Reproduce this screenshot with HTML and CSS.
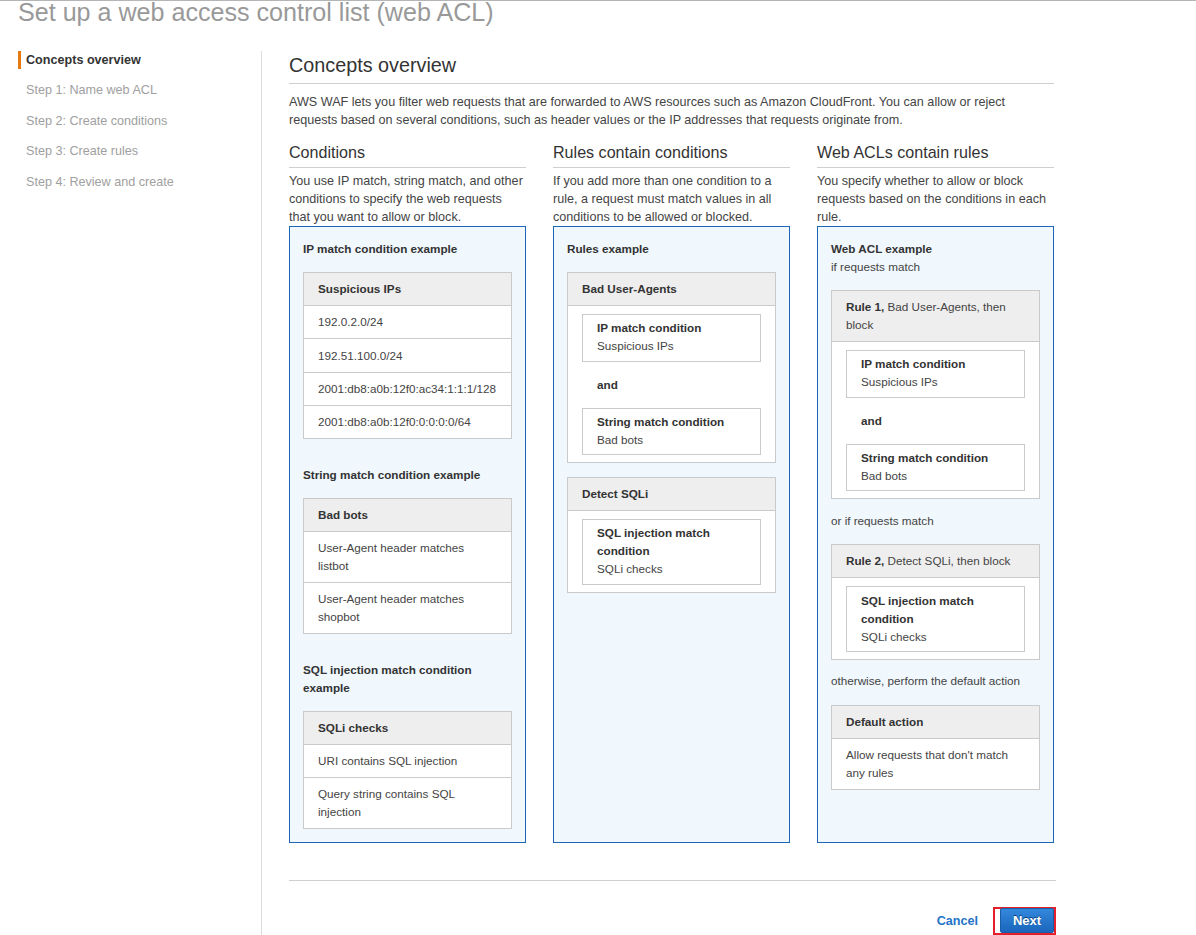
FILE: index.html
```html
<!DOCTYPE html>
<html lang="en">
<head>
<meta charset="utf-8">
<title>Set up a web access control list (web ACL)</title>
<link rel="stylesheet" href="styles.css">
</head>
<body>
<div class="page">
  <h1 class="page-title">Set up a web access control list (web ACL)</h1>
  <div class="wizard">
    <nav class="steps">
      <div class="step active">Concepts overview</div>
      <div class="step">Step 1: Name web ACL</div>
      <div class="step">Step 2: Create conditions</div>
      <div class="step">Step 3: Create rules</div>
      <div class="step">Step 4: Review and create</div>
    </nav>
    <main class="content">
      <h2 class="section-title">Concepts overview</h2>
      <p class="intro">AWS WAF lets you filter web requests that are forwarded to AWS resources such as Amazon CloudFront. You can allow or reject requests based on several conditions, such as header values or the IP addresses that requests originate from.</p>

      <div class="columns">
        <section class="col">
          <h3 class="col-title">Conditions</h3>
          <p class="col-desc">You use IP match, string match, and other conditions to specify the web requests that you want to allow or block.</p>
          <div class="example">
            <div class="group">
              <h4 class="ex-title">IP match condition example</h4>
              <div class="card">
                <div class="card-head"><b>Suspicious IPs</b></div>
                <div class="cell">192.0.2.0/24</div>
                <div class="cell">192.51.100.0/24</div>
                <div class="cell">2001:db8:a0b:12f0:ac34:1:1:1/128</div>
                <div class="cell">2001:db8:a0b:12f0:0:0:0:0/64</div>
              </div>
            </div>
            <div class="group">
              <h4 class="ex-title">String match condition example</h4>
              <div class="card">
                <div class="card-head"><b>Bad bots</b></div>
                <div class="cell">User-Agent header matches listbot</div>
                <div class="cell">User-Agent header matches shopbot</div>
              </div>
            </div>
            <div class="group">
              <h4 class="ex-title">SQL injection match condition example</h4>
              <div class="card">
                <div class="card-head"><b>SQLi checks</b></div>
                <div class="cell">URI contains SQL injection</div>
                <div class="cell">Query string contains SQL injection</div>
              </div>
            </div>
          </div>
        </section>

        <section class="col">
          <h3 class="col-title">Rules contain conditions</h3>
          <p class="col-desc">If you add more than one condition to a rule, a request must match values in all conditions to be allowed or blocked.</p>
          <div class="example">
            <h4 class="ex-title">Rules example</h4>
            <div class="card rule">
              <div class="card-head"><b>Bad User-Agents</b></div>
              <div class="card-body">
                <div class="cond"><b>IP match condition</b><span>Suspicious IPs</span></div>
                <div class="and">and</div>
                <div class="cond"><b>String match condition</b><span>Bad bots</span></div>
              </div>
            </div>
            <div class="card rule">
              <div class="card-head"><b>Detect SQLi</b></div>
              <div class="card-body">
                <div class="cond"><b>SQL injection match condition</b><span>SQLi checks</span></div>
              </div>
            </div>
          </div>
        </section>

        <section class="col">
          <h3 class="col-title">Web ACLs contain rules</h3>
          <p class="col-desc">You specify whether to allow or block requests based on the conditions in each rule.</p>
          <div class="example">
            <h4 class="ex-title">Web ACL example<span class="plain">if requests match</span></h4>
            <div class="card">
              <div class="card-head"><span class="strong">Rule 1,</span> Bad User-Agents, then block</div>
              <div class="card-body">
                <div class="cond"><b>IP match condition</b><span>Suspicious IPs</span></div>
                <div class="and">and</div>
                <div class="cond"><b>String match condition</b><span>Bad bots</span></div>
              </div>
            </div>
            <p class="connector">or if requests match</p>
            <div class="card">
              <div class="card-head"><span class="strong">Rule 2,</span> Detect SQLi, then block</div>
              <div class="card-body">
                <div class="cond"><b>SQL injection match condition</b><span>SQLi checks</span></div>
              </div>
            </div>
            <p class="connector">otherwise, perform the default action</p>
            <div class="card">
              <div class="card-head"><b>Default action</b></div>
              <div class="cell">Allow requests that don't match any rules</div>
            </div>
          </div>
        </section>
      </div>

      <div class="actions">
        <a class="cancel" href="#">Cancel</a>
        <span class="highlight"><button class="btn-next" type="button">Next</button></span>
      </div>
    </main>
  </div>
</div>
</body>
</html>
```
FILE: styles.css
```css
* { box-sizing: border-box; }

html, body {
  margin: 0;
  padding: 0;
  background: #fff;
}

body {
  font-family: "Liberation Sans", Arial, sans-serif;
  font-size: 12.6px;
  line-height: 18px;
  color: #444;
  border-top: 1px solid #b5b5b5;
  height: 935px;
  overflow: hidden;
}

.page {
  display: flex;
  flex-direction: column;
}

.page-title {
  margin: -3px 0 0 18px;
  font-size: 25.1px;
  line-height: 28px;
  font-weight: normal;
  color: #999;
  height: 24px;
}

.wizard {
  display: flex;
  margin-top: 29px;
  min-height: 885px;
}

.steps {
  width: 262px;
  padding-left: 18px;
  border-right: 1px solid #dcdcdc;
  display: flex;
  flex-direction: column;
  gap: 12.4px;
}

.step {
  height: 18px;
  line-height: 18px;
  padding-left: 8px;
  color: #a0a0a0;
}

.step.active {
  border-left: 3px solid #e8790f;
  padding-left: 5px;
  color: #333;
  font-weight: bold;
}

.content {
  width: 792px;
  padding-left: 27px;
  padding-top: 2px;
}

.section-title {
  margin: 0;
  font-size: 19.8px;
  line-height: 24px;
  font-weight: normal;
  color: #333;
  padding-bottom: 6px;
  border-bottom: 1px solid #cfcfcf;
}

.intro {
  margin: 9px 0 0;
}

.columns {
  display: grid;
  grid-template-columns: repeat(3, 237px);
  column-gap: 27px;
  margin-top: 13px;
}

.col {
  display: flex;
  flex-direction: column;
}

.col-title {
  margin: 0;
  font-size: 16.1px;
  line-height: 20px;
  font-weight: normal;
  color: #333;
  padding-bottom: 5px;
  border-bottom: 1px solid #cfcfcf;
}

.col-desc {
  margin: 4px 0 0;
}

.example {
  flex: 1;
  border: 1px solid #1b67b5;
  background: #f0f7fd;
  padding: 13px;
  font-size: 11.7px;
  line-height: 18px;
  color: #444;
}

.group + .group {
  margin-top: 26.3px;
}

.ex-title {
  margin: 0 0 14px;
  font-size: 11.7px;
  line-height: 18px;
  font-weight: bold;
  color: #333;
}

.ex-title .plain {
  display: block;
  font-weight: normal;
  color: #444;
}

.card {
  border: 1px solid #cacaca;
  background: #fff;
}

.card.rule + .card.rule {
  margin-top: 13.5px;
}

.card-head {
  background: #eeeeee;
  padding: 7.1px 14px;
  border-bottom: 1px solid #cacaca;
  color: #444;
}

.card-head b,
.card-head .strong {
  color: #333;
  font-weight: bold;
}

.cell {
  padding: 7.15px 14px;
}

.cell + .cell {
  border-top: 1px solid #cacaca;
}

.card-body {
  padding: 8px 14px 7.2px;
}

.cond {
  border: 1px solid #cacaca;
  padding: 4.3px 14px 5.2px;
  display: flex;
  flex-direction: column;
}

.cond b {
  color: #333;
}

.and {
  margin: 14px 0;
  padding-left: 15px;
  font-weight: bold;
  color: #333;
}

.connector {
  margin: 12.2px 0 14.6px;
}

.actions {
  margin-top: 37px;
  border-top: 1px solid #cfcfcf;
  padding-top: 26px;
  display: flex;
  justify-content: flex-end;
  align-items: center;
  margin-right: -2px;
}

.cancel {
  color: #2473c6;
  font-weight: bold;
  text-decoration: none;
  margin-right: 15px;
}

.highlight {
  display: inline-flex;
  border: 2px solid #e3202b;
  padding-left: 5px;
  height: 28px;
}

.btn-next {
  font-family: "Liberation Sans", Arial, sans-serif;
  font-size: 13px;
  font-weight: bold;
  color: #fff;
  text-shadow: 0 -1px 0 #0c3f78;
  width: 54px;
  height: 25px;
  margin-top: -1px;
  border: 1px solid #1a5ea7;
  border-radius: 2px;
  background: linear-gradient(#3388dc, #1a66bc);
  padding: 0;
  cursor: pointer;
}
```
